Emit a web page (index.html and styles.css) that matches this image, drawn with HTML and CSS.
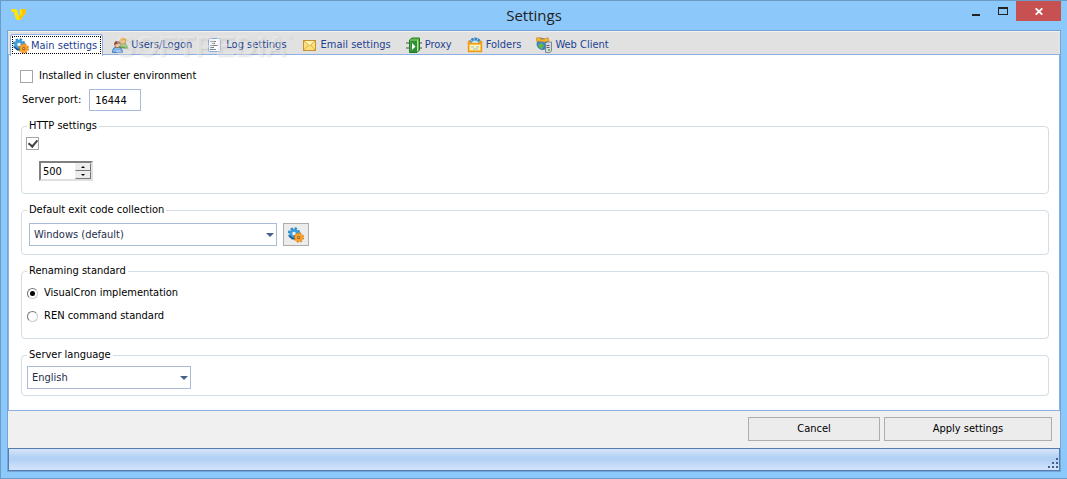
FILE: index.html
```html
<!DOCTYPE html>
<html lang="en">
<head>
    <meta charset="UTF-8">
    <meta name="viewport" content="width=device-width, initial-scale=1.0">
    <title>Settings</title>
    <link rel="stylesheet" href="styles.css">
</head>
<body>
    <!-- gears are used on the first tab and on the exit code button -->
    <svg class="defs" width="0" height="0" aria-hidden="true">
        <symbol id="gears" viewBox="0 0 16 16">
            <circle cx="6" cy="6.500" r="5" fill="none" stroke="#2f86c4" stroke-width="2.400" stroke-dasharray="2.300 1.627"/>
            <circle cx="6" cy="6.500" r="3.300" fill="#eef6fa" stroke="#3f9fdc" stroke-width="3"/>
            <path d="M1.500 9 Q3.500 12 7 11.500" fill="none" stroke="#1d5a8e" stroke-width="1.600"/>
            <circle cx="10.800" cy="10.500" r="4.200" fill="none" stroke="#d9791a" stroke-width="2" stroke-dasharray="1.900 1.399"/>
            <circle cx="10.800" cy="10.500" r="2.700" fill="#8a4f18" stroke="#f7a125" stroke-width="2.400"/>
            <circle cx="10.800" cy="10.500" r=".8" fill="#e8c48a"/>
        </symbol>
    </svg>

    <div class="window">
        <header class="titlebar">
            <svg class="app-logo" width="16" height="14" viewBox="0 0 16 14" aria-hidden="true">
                <path d="M0 2 L1 1 H5 L6 2 L8 8 L9 7 V4 L8 3 L10 1 H14 L15 3 L14 6 L9 12 H6 L4 9 L3 4 H1 Z" fill="#ffe600"/>
                <path d="M10 1 H14 L15 3 L14 6 L9 12 L8 9 L11 6 L11 4 Z" fill="#ffc400"/>
            </svg>
            <h1>Settings</h1>
            <div class="caption-buttons">
                <button type="button" class="minimize" aria-label="Minimize">
                    <svg width="10" height="12" viewBox="0 0 10 12"><path d="M1 10 H9" stroke="#222" stroke-width="2"/></svg>
                </button>
                <button type="button" class="maximize" aria-label="Maximize">
                    <svg width="10" height="8" viewBox="0 0 10 8"><path d="M0 1 H10 M0 7.500 H10 M.5 0 V8 M9.500 0 V8" stroke="#222" fill="none"/><path d="M0 1 H10" stroke="#222" stroke-width="2"/></svg>
                </button>
                <button type="button" class="close" aria-label="Close">
                    <svg width="8" height="7" viewBox="0 0 8 7"><path d="M.7 .3 L7.300 6.700 M7.300 .3 L.7 6.700" stroke="#fff" stroke-width="1.800"/></svg>
                </button>
            </div>
        </header>

        <form class="client">
            <nav class="tabs">
                <a href="#main" class="tab active">
                    <svg class="icon" aria-hidden="true"><use href="#gears"/></svg>
                    <span>Main settings</span>
                </a>
                <a href="#users" class="tab">
                    <svg class="icon" viewBox="0 0 16 16" aria-hidden="true">
                        <path d="M7 11 V9 Q8 6 11 6 Q15 6 15.500 11 Z" fill="#74b84a" stroke="#4b8b2c" stroke-width=".7"/>
                        <circle cx="11" cy="3.800" r="2.900" fill="#f7cf9d" stroke="#c58a2a" stroke-width=".7"/>
                        <path d="M8 4 Q8 .5 11 .5 Q14.500 .5 14 4 Q12 2 8 4" fill="#f2b23a"/>
                        <path d="M.5 15.500 V13.500 Q1 10 5 10 Q10 10 10.500 15.500 Z" fill="#7fb6ec" stroke="#3a6fb0" stroke-width=".8"/>
                        <circle cx="5.500" cy="7.500" r="3" fill="#f5c9a0" stroke="#9a5a35" stroke-width=".7"/>
                        <path d="M2.400 8 Q2 4 5.500 4 Q9 4 8.600 8 Q7 5.800 2.400 8" fill="#8d4b2b"/>
                    </svg>
                    <span>Users/Logon</span>
                </a>
                <a href="#log" class="tab">
                    <svg class="icon" viewBox="0 0 16 16" aria-hidden="true">
                        <rect x="1.500" y="1.500" width="12" height="13" rx="1" fill="#fff" stroke="#8aa9dc"/>
                        <path d="M3 4.500 H9 M5 6.500 H8 M3 8.500 H11 M3 10.500 H7 M3 12.500 H9" stroke="#7a8594"/>
                    </svg>
                    <span>Log settings</span>
                </a>
                <a href="#email" class="tab">
                    <svg class="icon" viewBox="0 0 16 16" aria-hidden="true">
                        <rect x="1.500" y="3.500" width="12" height="10" fill="#ffe27a" stroke="#c8932b"/>
                        <path d="M2 4 L7.500 9 L13 4 Z" fill="#fff3b8"/>
                        <path d="M2 4 L7.500 9 L13 4 M2 13 L6 8.500 M13 13 L9 8.500" fill="none" stroke="#dba94a"/>
                    </svg>
                    <span>Email settings</span>
                </a>
                <a href="#proxy" class="tab">
                    <svg class="icon" viewBox="0 0 16 16" aria-hidden="true">
                        <path d="M0 6 H4 M0 11 H4 M12 6 H16 M12 11 H16" stroke="#666" stroke-width="2"/>
                        <path d="M0 6 H3 M0 11 H3 M13 6 H16 M13 11 H16" stroke="#ddd" stroke-width=".8"/>
                        <path d="M3.500 3 L6 1 H13.500 V13 L11 15.500 H3.500 Z" fill="#63b94c" stroke="#267a26"/>
                        <rect x="4.500" y="4" width="6.500" height="11" fill="#2e8f38"/>
                        <path d="M6 6 L9.500 9.500 L6 13 Z" fill="#fff"/>
                        <path d="M11.500 3.500 V14" stroke="#b4e69e"/>
                    </svg>
                    <span>Proxy</span>
                </a>
                <a href="#folders" class="tab">
                    <svg class="icon" viewBox="0 0 16 16" aria-hidden="true">
                        <path d="M3 6 Q4 2 8 2 Q12 2 13 6" fill="none" stroke="#2f83c6" stroke-width="3" stroke-dasharray="2.500 .7"/>
                        <path d="M4 6 Q5 3.500 8 3.500 Q11 3.500 12 6" fill="#d8effc" stroke="#65b5e8"/>
                        <path d="M1.500 14.500 V4.500 H3 V6.500 H13 V4.500 H14.500 V14.500 Z" fill="#ffd461" stroke="#f09a1c" stroke-width="1.400"/>
                        <rect x="3" y="8" width="10" height="5" fill="#fff1b8"/>
                        <path d="M4 10 H7 M9 10 H12 M6 12 H11" stroke="#9fc1c4"/>
                    </svg>
                    <span>Folders</span>
                </a>
                <a href="#web" class="tab">
                    <svg class="icon" viewBox="0 0 16 16" aria-hidden="true">
                        <circle cx="6.500" cy="7" r="5.500" fill="#3b86d0" stroke="#28609e" stroke-width=".7"/>
                        <path d="M2 8 L5 6 L8 8 L6 12 Q3 12 2 8" fill="#62b744"/>
                        <path d="M0 1 L5 .5 L4 2 Q9 3 12 .5 L13 4 Q9 6 3 4 L1 5 Z" fill="#f7b52c" stroke="#c5831a" stroke-width=".6"/>
                        <path d="M9.500 6.500 L11 5 H15.500 V14 L14 15.500 H9.500 Z" fill="#d4d9df" stroke="#69737f" stroke-width=".8"/>
                        <path d="M10.500 8.500 H13.500 M10.500 10.500 H13.500" stroke="#59636f"/>
                        <path d="M12 13 H14" stroke="#46b83c" stroke-width="1.500"/>
                    </svg>
                    <span>Web Client</span>
                </a>
                <span class="watermark">SOFTPEDIA<sup>®</sup></span>
            </nav>

            <main class="page" id="main">
                <label class="check cluster"><input type="checkbox"> Installed in cluster environment</label>
                <div class="port">
                    <label for="port">Server port:</label>
                    <input type="text" id="port" value="16444">
                </div>

                <fieldset class="http">
                    <legend>HTTP settings</legend>
                    <input type="checkbox" aria-label="Enable HTTP" checked>
                    <div class="spinner">
                        <input type="number" value="500" aria-label="HTTP port">
                        <div class="spin-buttons">
                            <button type="button" class="up" aria-label="Increase"></button>
                            <button type="button" class="down" aria-label="Decrease"></button>
                        </div>
                    </div>
                </fieldset>

                <fieldset class="exit-code">
                    <legend>Default exit code collection</legend>
                    <div class="dropdown wide">
                        <select aria-label="Default exit code collection">
                            <option>Windows (default)</option>
                        </select>
                    </div>
                    <button type="button" class="push gear-button" aria-label="Manage collections">
                        <svg class="icon"><use href="#gears"/></svg>
                    </button>
                </fieldset>

                <fieldset class="renaming">
                    <legend>Renaming standard</legend>
                    <label class="check"><input type="radio" name="renaming" checked> VisualCron implementation</label>
                    <label class="check"><input type="radio" name="renaming"> REN command standard</label>
                </fieldset>

                <fieldset class="language">
                    <legend>Server language</legend>
                    <div class="dropdown">
                        <select aria-label="Server language">
                            <option>English</option>
                        </select>
                    </div>
                </fieldset>
            </main>

            <div class="actions">
                <button type="button" class="push cancel">Cancel</button>
                <button type="submit" class="push apply">Apply settings</button>
            </div>
            <footer class="statusbar">
                <svg width="11" height="11" viewBox="0 0 11 11" aria-hidden="true">
                    <path d="M8 0 h2 v2 h-2z M4 4 h2 v2 h-2z M8 4 h2 v2 h-2z M0 8 h2 v2 h-2z M4 8 h2 v2 h-2z M8 8 h2 v2 h-2z" fill="#44608f"/>
                </svg>
            </footer>
        </form>
    </div>
</body>
</html>
```
FILE: styles.css
```css
* {
    box-sizing: border-box;
}

body {
    margin: 0;
    font-family: "DejaVu Sans Condensed", "Noto Sans", sans-serif;
    font-size: 11px;
    line-height: 14px;
    color: #000;
}

button, input, select {
    font: inherit;
    color: inherit;
    margin: 0;
    padding: 0;
    border-radius: 0;
}

svg {
    display: block;
}

.defs {
    position: absolute;
}

.icon {
    width: 16px;
    height: 16px;
    flex: none;
}

.window {
    display: flex;
    flex-direction: column;
    min-height: 100vh;
    padding: 0 6px 6px;
    border: 1px solid #6b9bc7;
    border-right: none;
    background: #8dc8fa;
}

/* title bar */
.titlebar {
    display: grid;
    grid-template-columns: 1fr auto 1fr;
    align-items: start;
    height: 29px;
}

.app-logo {
    margin: 7px 0 0 4px;
}

h1 {
    margin: 4px 0 0;
    font: 15px/20px "Open Sans", sans-serif;
    color: #222;
}

.caption-buttons {
    display: flex;
    justify-content: flex-end;
}

.caption-buttons button {
    display: flex;
    align-items: center;
    justify-content: center;
    width: 27px;
    height: 20px;
    border: none;
    background: none;
}

.caption-buttons .close {
    width: 45px;
    background: #c75050;
}

/* client area */
.client {
    display: flex;
    flex-direction: column;
    flex: 1;
    border: 1px solid #74a5d8;
}

.tabs {
    position: relative;
    display: flex;
    height: 24px;
    padding: 2px 2px 0;
    border-top: 1px solid #f2f2f2;
    border-bottom: 1px solid #8cb0e3;
    background: #e1e1e1;
}

.tab {
    display: flex;
    align-items: center;
    gap: 3px;
    height: 22px;
    padding: 0 8px 0 7px;
    color: #1e4191;
    text-decoration: none;
    white-space: nowrap;
}

.tab.active {
    gap: 2px;
    margin-right: 2px;
    padding: 0 5px 0 2px;
    border: 1px solid #8cb0e3;
    border-bottom: none;
    border-radius: 3px 3px 0 0;
    background: #fff;
    outline: 1px dotted #000;
    outline-offset: -3px;
}

.watermark {
    position: absolute;
    left: 107px;
    top: -1px;
    font: bold 30px/30px "Liberation Sans", sans-serif;
    color: rgba(255, 255, 255, 0.4);
    text-shadow: 1px 1px 2px rgba(0, 0, 0, 0.1);
    pointer-events: none;
}

.watermark sup {
    font-size: 8px;
    line-height: 8px;
    vertical-align: 17px;
}

.page {
    flex: 1;
    padding: 14px 10px 14px 13px;
    border: 1px solid #8cb0e3;
    border-top: none;
    background: #fff;
}

.check {
    display: flex;
    align-items: center;
    gap: 6px;
}

input[type="checkbox"],
input[type="radio"] {
    appearance: none;
    display: grid;
    place-items: center;
    flex: none;
    width: 13px;
    height: 13px;
    border: 1px solid #a5a5a5;
    background: #fff;
}

input[type="checkbox"]:checked::before {
    content: "";
    width: 4px;
    height: 7px;
    margin-bottom: 2px;
    border: solid #444;
    border-width: 0 2px 2px 0;
    transform: rotate(40deg);
}

input[type="radio"] {
    width: 11px;
    height: 11px;
    border-color: #777 #ccc #ccc #777;
    border-radius: 50%;
}

input[type="radio"]:checked::before {
    content: "";
    width: 5px;
    height: 5px;
    border-radius: 50%;
    background: #000;
}

.cluster {
    margin-left: -2px;
}

.port {
    display: flex;
    align-items: center;
    gap: 8px;
    margin: 6px 0 8px;
}

.port input {
    width: 52px;
    height: 22px;
    padding: 0 5px;
    border: 1px solid #a9bbdc;
}

fieldset {
    min-width: 0;
    margin: 0 0 9px -1px;
    padding: 0 5px;
    border: 1px solid #d3dde6;
    border-radius: 4px;
}

legend {
    padding: 0 2px;
}

.http {
    height: 75px;
    padding: 0 4px;
}

.http legend {
    margin-left: 1px;
}

.http > input {
    margin-top: 4px;
}

.spinner {
    display: flex;
    width: 54px;
    height: 20px;
    margin: 11px 0 0 13px;
    border: 2px solid;
    border-color: #808080 #e0e0e0 #e0e0e0 #808080;
}

.spinner input {
    flex: 1;
    min-width: 0;
    padding: 2px 0 0 2px;
    border: none;
    appearance: textfield;
}

.spinner input::-webkit-inner-spin-button {
    display: none;
}

.spin-buttons {
    display: flex;
    flex-direction: column;
    width: 16px;
}

.spin-buttons button {
    display: grid;
    place-items: center;
    flex: 1;
    border: 1px solid;
    border-color: #eee #777 #777 #eee;
    background: #ececec;
}

.spin-buttons button::before {
    content: "";
    border: 2px solid transparent;
    border-top: none;
    border-bottom-color: #000;
}

.spin-buttons .down::before {
    border-top: 2px solid #000;
    border-bottom: none;
}

.exit-code {
    display: flex;
    gap: 6px;
    height: 52px;
    padding: 6px 7px 0;
}

.exit-code legend {
    margin-left: -2px;
}

.dropdown {
    position: relative;
    width: 164px;
    height: 23px;
}

.dropdown.wide {
    width: 248px;
}

.dropdown::after {
    content: "";
    position: absolute;
    right: 3px;
    top: 10px;
    border: 4px solid transparent;
    border-top-color: #46618c;
    border-bottom: none;
    pointer-events: none;
}

.dropdown select {
    appearance: none;
    width: 100%;
    height: 100%;
    padding: 0 16px 0 4px;
    border: 1px solid #a9bbd6;
    background: #fff;
    color: #1e2f4d;
}

.push {
    border: 1px solid #adadad;
    background: #ececec;
}

.gear-button {
    display: flex;
    align-items: center;
    justify-content: center;
    width: 26px;
    height: 23px;
}

.renaming {
    height: 75px;
    padding-top: 8px;
}

.renaming .check + .check {
    margin-top: 9px;
}

.language {
    height: 48px;
    margin-bottom: 0;
    padding-top: 4px;
}

.actions {
    display: flex;
    justify-content: flex-end;
    gap: 4px;
    padding: 6px 8px 7px;
    background: #f0f0f0;
}

.actions .push {
    width: 168px;
    height: 24px;
}

.actions .cancel {
    width: 132px;
}

.statusbar {
    display: flex;
    align-items: flex-end;
    justify-content: flex-end;
    height: 23px;
    padding: 0 0 1px;
    border: 1px solid #567db1;
    background: linear-gradient(#d7e6f9, #b3d0f5 40%, #b3d0f5 50%, #d4e5fb);
}
```
